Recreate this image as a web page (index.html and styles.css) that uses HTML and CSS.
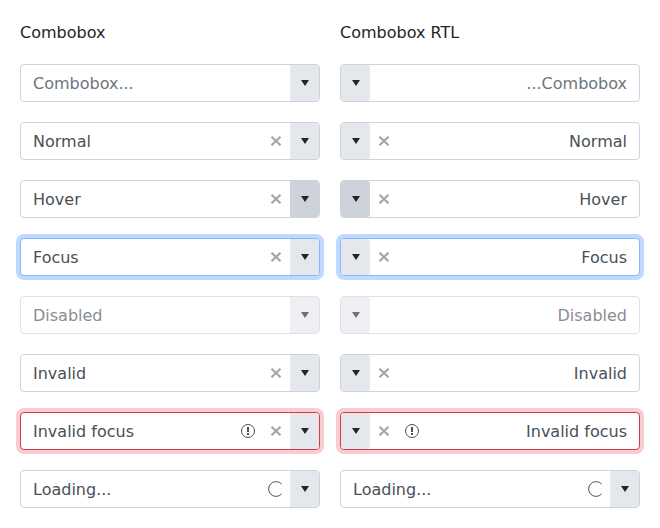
FILE: index.html
```html
<!DOCTYPE html>
<html lang="en">
<head>
<meta charset="utf-8">
<title>Combobox</title>
<link rel="stylesheet" href="styles.css">
</head>
<body>
<svg class="sprite" aria-hidden="true">
  <symbol id="caret" viewBox="0 0 16 16"><path d="M4 5h8l-4 6z" fill="currentColor"/></symbol>
  <symbol id="cross" viewBox="0 0 16 16"><path d="M3.5 3.7l9 8.6M12.5 3.7l-9 8.6" fill="none" stroke="currentColor" stroke-width="2.2"/></symbol>
  <symbol id="alert" viewBox="0 0 16 16"><circle cx="8" cy="8" r="6.5" fill="none" stroke="currentColor"/><path d="M7 4h2v5H7zM7 10h2v2H7z" fill="currentColor"/></symbol>
  <symbol id="spinner" viewBox="0 0 16 16"><path d="M13.6 3.1A7.4 7.4 0 1 0 13.6 12.9" fill="none" stroke="currentColor"/></symbol>
</svg>
<main class="gallery">
  <section class="column">
    <h2 class="title">Combobox</h2>
    <div class="combobox">
      <input class="field" aria-label="Empty" placeholder="Combobox...">
      <button class="toggle" type="button" aria-label="Open"><svg class="icon"><use href="#caret"/></svg></button>
    </div>
    <div class="combobox">
      <input class="field" aria-label="Normal" value="Normal">
      <button class="clear" type="button" aria-label="Clear"><svg class="icon"><use href="#cross"/></svg></button>
      <button class="toggle" type="button" aria-label="Open"><svg class="icon"><use href="#caret"/></svg></button>
    </div>
    <div class="combobox is-hover">
      <input class="field" aria-label="Hover" value="Hover">
      <button class="clear" type="button" aria-label="Clear"><svg class="icon"><use href="#cross"/></svg></button>
      <button class="toggle" type="button" aria-label="Open"><svg class="icon"><use href="#caret"/></svg></button>
    </div>
    <div class="combobox is-focus">
      <input class="field" aria-label="Focus" value="Focus">
      <button class="clear" type="button" aria-label="Clear"><svg class="icon"><use href="#cross"/></svg></button>
      <button class="toggle" type="button" aria-label="Open"><svg class="icon"><use href="#caret"/></svg></button>
    </div>
    <div class="combobox is-disabled">
      <input class="field" aria-label="Disabled" value="Disabled" disabled>
      <button class="toggle" type="button" aria-label="Open" disabled><svg class="icon"><use href="#caret"/></svg></button>
    </div>
    <div class="combobox">
      <input class="field" aria-label="Invalid" value="Invalid">
      <button class="clear" type="button" aria-label="Clear"><svg class="icon"><use href="#cross"/></svg></button>
      <button class="toggle" type="button" aria-label="Open"><svg class="icon"><use href="#caret"/></svg></button>
    </div>
    <div class="combobox is-invalid">
      <input class="field" aria-label="Invalid focus" value="Invalid focus" aria-invalid="true">
      <span class="status"><svg class="icon"><use href="#alert"/></svg></span>
      <button class="clear" type="button" aria-label="Clear"><svg class="icon"><use href="#cross"/></svg></button>
      <button class="toggle" type="button" aria-label="Open"><svg class="icon"><use href="#caret"/></svg></button>
    </div>
    <div class="combobox">
      <input class="field" aria-label="Loading" value="Loading...">
      <span class="status"><svg class="icon"><use href="#spinner"/></svg></span>
      <button class="toggle" type="button" aria-label="Open"><svg class="icon"><use href="#caret"/></svg></button>
    </div>
  </section>
  <section class="column">
    <h2 class="title">Combobox RTL</h2>
    <div class="combobox" dir="rtl">
      <input class="field" aria-label="Empty" placeholder="Combobox...">
      <button class="toggle" type="button" aria-label="Open"><svg class="icon"><use href="#caret"/></svg></button>
    </div>
    <div class="combobox" dir="rtl">
      <input class="field" aria-label="Normal" value="Normal">
      <button class="clear" type="button" aria-label="Clear"><svg class="icon"><use href="#cross"/></svg></button>
      <button class="toggle" type="button" aria-label="Open"><svg class="icon"><use href="#caret"/></svg></button>
    </div>
    <div class="combobox is-hover" dir="rtl">
      <input class="field" aria-label="Hover" value="Hover">
      <button class="clear" type="button" aria-label="Clear"><svg class="icon"><use href="#cross"/></svg></button>
      <button class="toggle" type="button" aria-label="Open"><svg class="icon"><use href="#caret"/></svg></button>
    </div>
    <div class="combobox is-focus" dir="rtl">
      <input class="field" aria-label="Focus" value="Focus">
      <button class="clear" type="button" aria-label="Clear"><svg class="icon"><use href="#cross"/></svg></button>
      <button class="toggle" type="button" aria-label="Open"><svg class="icon"><use href="#caret"/></svg></button>
    </div>
    <div class="combobox is-disabled" dir="rtl">
      <input class="field" aria-label="Disabled" value="Disabled" disabled>
      <button class="toggle" type="button" aria-label="Open" disabled><svg class="icon"><use href="#caret"/></svg></button>
    </div>
    <div class="combobox" dir="rtl">
      <input class="field" aria-label="Invalid" value="Invalid">
      <button class="clear" type="button" aria-label="Clear"><svg class="icon"><use href="#cross"/></svg></button>
      <button class="toggle" type="button" aria-label="Open"><svg class="icon"><use href="#caret"/></svg></button>
    </div>
    <div class="combobox is-invalid" dir="rtl">
      <input class="field" aria-label="Invalid focus" value="Invalid focus" aria-invalid="true">
      <span class="status"><svg class="icon"><use href="#alert"/></svg></span>
      <button class="clear" type="button" aria-label="Clear"><svg class="icon"><use href="#cross"/></svg></button>
      <button class="toggle" type="button" aria-label="Open"><svg class="icon"><use href="#caret"/></svg></button>
    </div>
    <div class="combobox">
      <input class="field" aria-label="Loading" value="Loading...">
      <span class="status"><svg class="icon"><use href="#spinner"/></svg></span>
      <button class="toggle" type="button" aria-label="Open"><svg class="icon"><use href="#caret"/></svg></button>
    </div>
  </section>
</main>
</body>
</html>
```
FILE: styles.css
```css
* {
  box-sizing: border-box;
}

body {
  margin: 0;
  background: #fff;
  color: #212529;
  font: 16px/24px "DejaVu Sans", sans-serif;
}

.sprite {
  display: none;
}

.gallery {
  display: grid;
  grid-template-columns: 1fr 1fr;
  gap: 20px;
  padding: 20px;
}

.column {
  display: flex;
  flex-direction: column;
  gap: 20px;
  min-width: 0;
}

.title {
  margin: 0;
  padding-top: 2px;
  font-size: 16px;
  font-weight: 400;
  line-height: 22px;
}

.combobox {
  display: flex;
  border: 1px solid #cdd3da;
  border-radius: 4px;
  background: #fff;
  color: #495057;
}

.field {
  flex: 1;
  min-width: 0;
  margin: 0;
  padding: 7px 12px 5px;
  border: 0;
  outline: 0;
  background: none;
  color: inherit;
  font: inherit;
}

.field::placeholder {
  color: #6c757d;
  opacity: 1;
}

.clear,
.status,
.toggle {
  display: flex;
  align-items: center;
  justify-content: center;
  width: 28px;
  padding: 0;
  border: 0;
  background: none;
  color: inherit;
}

.clear {
  opacity: 0.5;
}

.toggle {
  width: 29px;
  padding-left: 1px;
  border-radius: 0 3px 3px 0;
  background: #e4e7ec;
  color: #212529;
}

[dir="rtl"] .toggle {
  border-radius: 3px;
}

.icon {
  display: block;
  width: 16px;
  height: 16px;
}

.is-hover .toggle {
  background: #cdd2db;
}

.is-focus {
  border-color: #86b7fe;
  box-shadow: 0 0 0 4px #c0d9ff;
}

.is-invalid {
  border-color: #dc3545;
  box-shadow: 0 0 0 4px #f6cdd1;
}

.is-disabled {
  opacity: 0.65;
}
```
